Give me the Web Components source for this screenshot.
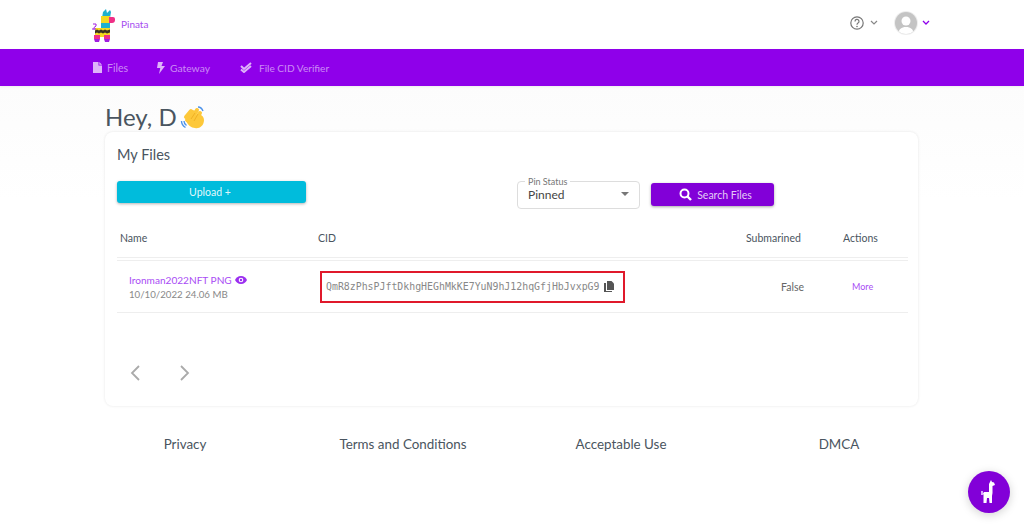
<!DOCTYPE html>
<html lang="en">
<head>
<meta charset="utf-8">
<title>Pinata</title>
<style>
  html, body { margin: 0; height: 527px; overflow: hidden; }
  body { background: linear-gradient(#fcfcfc 86px, #fff 200px); font-family: "Lato", "Noto Sans", sans-serif; color: #4b5563; }
  main { display: block; padding: 18px 106px 0 105px; }
</style>
</head>
<body>
<pin-header></pin-header>
<pin-nav></pin-nav>
<main>
  <hey-title>Hey, D</hey-title>
  <files-card></files-card>
</main>
<pin-footer></pin-footer>
<pin-fab></pin-fab>

<script>
const llama = `<svg width="23" height="34" viewBox="0 0 23 34">
  <path d="M10 9l1-6 3-3 1 4 3-3 1 2-1 6z" fill="#1fb0cf"/>
  <path d="M9 7h9v8H9z" fill="#f4d920"/>
  <path d="M17 8h4a2 2 0 0 1 2 2v1a3 3 0 0 1-3 3h-3z" fill="#ef2f86"/>
  <path d="M9 14h9v6H9z" fill="#1fb0cf"/>
  <path d="M3 19h15v9H3z" fill="#f4d920"/>
  <path d="M3 21.500l2-1 2 1 2-1 2 1 2-1 2 1 3-1v3l-3 1-2-1-2 1-2-1-2 1-2-1-2 1z" fill="#3a3320"/>
  <rect x="2" y="26" width="6" height="4" fill="#ef2f86"/><rect x="12" y="26" width="6" height="4" fill="#ef2f86"/>
  <path d="M2 30h6l-1 3H3zM12 30h6l-1 3h-4z" fill="#a01ee0"/>
  <path d="M1 15h3v2l-2 1.500M2 18.500v2M0 20h4" fill="none" stroke="#a01ee0" stroke-width="1"/>
</svg>`;

class PinHeader extends HTMLElement {
  constructor() {
    super();
    this.attachShadow({ mode: 'open' });
    this.shadowRoot.innerHTML = `
      <style>
        :host { display: flex; align-items: center; height: 49px; background: #fff; padding: 0 94px 0 92px; box-sizing: border-box; }
        .logo { display: flex; align-items: center; gap: 6px; color: #a64cf0; font-size: 10px; }
        .logo svg { display: block; margin-top: 2px; }
        .logo span { margin-top: -1px; }
        .right { margin-left: auto; display: flex; align-items: center; padding-bottom: 4px; }
        .help { display: flex; align-items: center; gap: 6px; margin: 0 17px 0 1px; }
        .avatar { width: 22px; height: 22px; border-radius: 50%; background: #c4c4c4; overflow: hidden; margin-right: 5px; box-shadow: 0 0 0 1px #eee; }
        svg { display: block; }
      </style>
      <div class="logo">${llama}<span>Pinata</span></div>
      <div class="right">
        <div class="help">
          <svg width="14" height="14" viewBox="0 0 14 14"><circle cx="7" cy="7" r="6.2" fill="none" stroke="#777" stroke-width="1.2"/><path d="M5 5.4a2 2 0 1 1 3 1.7c-.7.4-1 .8-1 1.6" fill="none" stroke="#777" stroke-width="1.2"/><circle cx="7" cy="10.5" r=".8" fill="#777"/></svg>
          <svg width="8" height="5" viewBox="0 0 8 5"><path d="M1 1l3 3 3-3" fill="none" stroke="#888" stroke-width="1.2"/></svg>
        </div>
        <div class="avatar"><svg width="22" height="22" viewBox="0 0 22 22"><circle cx="11" cy="9" r="4.5" fill="#fff"/><path d="M3.5 22c0-5 3-7 7.500-7s7.500 2 7.500 7z" fill="#fff"/></svg></div>
        <svg width="8" height="5" viewBox="0 0 8 5"><path d="M1 1l3 3 3-3" fill="none" stroke="#8e00ea" stroke-width="1.3"/></svg>
      </div>`;
  }
}
customElements.define('pin-header', PinHeader);

class PinNav extends HTMLElement {
  constructor() {
    super();
    this.attachShadow({ mode: 'open' });
    this.shadowRoot.innerHTML = `
      <style>
        :host { display: flex; align-items: center; height: 37px; background: #8f00ea; padding-left: 93px; color: rgba(255,255,255,.55); font-size: 10.500px; box-shadow: 0 1px 2px rgba(0,0,0,.06); }
        .item { display: flex; align-items: center; gap: 5px; }
        svg { display: block; fill: rgba(255,255,255,.7); }
      </style>
      <div class="item" style="margin-right:28px"><svg width="9" height="11" viewBox="0 0 9 11"><path d="M0 0h5.500v3.500H9V11H0zM6.300 0L9 2.700H6.300z"/></svg>Files</div>
      <div class="item" style="margin-right:30px"><svg width="9" height="12" viewBox="0 0 9 12"><path d="M2 0h5L5.500 4H9L3 12l1.300-6H1z"/></svg><span style="font-size:10.300px">Gateway</span></div>
      <div class="item" style="gap:7px"><svg width="12" height="11" viewBox="0 0 12 11"><path d="M1 4l3 3 7-6" fill="none" stroke="rgba(255,255,255,.7)" stroke-width="2"/><path d="M1 7.500l3 2.500 7-6" fill="none" stroke="rgba(255,255,255,.7)" stroke-width="2"/></svg><span style="font-size:10.100px">File CID Verifier</span></div>`;
  }
}
customElements.define('pin-nav', PinNav);

class HeyTitle extends HTMLElement {
  constructor() {
    super();
    this.attachShadow({ mode: 'open' });
    this.shadowRoot.innerHTML = `
      <style>
        :host { display: flex; align-items: center; gap: 3px; height: 28px; box-sizing: border-box; padding-bottom: 4px; font-size: 24px; color: #4a5560; }
        svg { margin-top: 3px; }
      </style>
      <slot></slot>
      <svg width="25" height="24" viewBox="0 0 25 24">
        <g fill="none" stroke="#fdc83a" stroke-width="4" stroke-linecap="round">
          <path d="M7 14l6-8M10 16l7-12M14 17l6-10M6 11l5-6"/>
        </g>
        <path d="M7 15l6-4 6-3c3 1 5 3 5 6 0 6-5 9-9 8-4 0-7-3-9-7z" fill="#fdc83a"/>
        <path d="M11 13l4-6M14 15l4-7" stroke="#eba91f" stroke-width=".8" fill="none"/>
        <path d="M1.500 15c0 2.500 1.500 5 4 6.500M4 15c0 2 1 3.500 2.500 4.500" stroke="#4f94ea" stroke-width="1.400" fill="none"/>
        <path d="M18 1c2 0 4 1.500 5 4" stroke="#4f94ea" stroke-width="1.400" fill="none"/>
      </svg>`;
  }
}
customElements.define('hey-title', HeyTitle);

class FileRow extends HTMLElement {
  constructor() {
    super();
    this.attachShadow({ mode: 'open' });
    const cid = this.getAttribute('cid');
    this.shadowRoot.innerHTML = `
      <style>
        :host { display: grid; grid-template-columns: 203px 1fr 65px; align-items: center; height: 53px; border-top: 1px solid #eee; border-bottom: 1px solid #eee; box-sizing: border-box; font-size: 10.500px; color: #777; }
        .name { padding-left: 12px; line-height: 14px; }
        .name .t { color: #a94cf5; display: flex; align-items: center; gap: 3px; font-size: 10.100px; }
        .name .m { font-size: 9.700px; color: #888; }
        .cid { justify-self: start; display: flex; align-items: center; gap: 5px; width: 305px; height: 32px; box-sizing: border-box; border: 2px solid #e0192b; padding-left: 4px; font: 9.900px "DejaVu Sans Mono", monospace; color: #888; }
        .false { padding-right: 39px; color: #666; }
        .more { color: #a94cf5; font-size: 9px; padding-left: 9px; }
        svg { display: block; }
      </style>
      <div class="name">
        <div class="t">${this.getAttribute('name')}
          <svg width="12" height="8" viewBox="0 0 12 8"><path d="M6 0c3 0 5 2 6 4-1 2-3 4-6 4S1 6 0 4c1-2 3-4 6-4z" fill="#9b2ff0"/><circle cx="6" cy="4" r="2.300" fill="#fff"/><circle cx="6" cy="4" r="1.200" fill="#9b2ff0"/></svg>
        </div>
        <div class="m">${this.getAttribute('meta')}</div>
      </div>
      <div style="display:flex;align-items:center;justify-content:space-between">
        <div class="cid"><span>${cid}</span>
          <svg width="10" height="11" viewBox="0 0 10 11"><path d="M3 0h4.500L10 2.500V9H3z" fill="#555"/><path d="M0 2h2v8h6v1H0z" fill="#555"/></svg>
        </div>
        <span class="false">False</span>
      </div>
      <div class="more">More</div>`;
  }
}
customElements.define('file-row', FileRow);

class FilesCard extends HTMLElement {
  constructor() {
    super();
    this.attachShadow({ mode: 'open' });
    this.shadowRoot.innerHTML = `
      <style>
        :host { display: block; height: 274px; box-sizing: border-box; padding: 13px 10px 0 12px; background: #fff; border-radius: 8px; box-shadow: 0 0 3px rgba(0,0,0,.1); }
        h2 { margin: 0; font-size: 14.500px; font-weight: 400; line-height: 20px; color: #4a5560; }
        .bar { display: flex; align-items: flex-start; margin-top: 16px; height: 28px; }
        .upload { width: 189px; height: 22px; border: 0; border-radius: 3px; background: #00bcdc; color: rgba(255,255,255,.9); font: inherit; font-size: 10.500px; box-shadow: 0 1px 3px rgba(0,0,0,.3); padding: 0 3px 0 0; }
        .select { position: relative; margin-left: 211px; width: 123px; height: 28px; box-sizing: border-box; border: 1px solid #ddd; border-radius: 4px; display: flex; align-items: center; justify-content: space-between; padding: 0 10px 2px; font-size: 12px; color: #444; }
        .select label { position: absolute; left: 7px; top: -5px; padding: 0 3px; background: #fff; font-size: 9px; color: #777; line-height: 10px; }
        .caret { width: 0; height: 0; border: 4px solid transparent; border-top: 4px solid #777; border-bottom: 0; }
        .search { display: flex; align-items: center; justify-content: center; gap: 5px; margin: 2px 0 0 11px; width: 123px; height: 23px; border: 0; border-radius: 3px; background: #8200d8; color: rgba(255,255,255,.8); font: inherit; font-size: 10.500px; box-shadow: 0 1px 3px rgba(0,0,0,.35); padding: 0 0 0 6px; }
        .head { display: grid; grid-template-columns: 198px 428px 97px 1fr; align-items: start; height: 49px; border-bottom: 1px solid #eee; font-size: 10.500px; line-height: 14px; color: #4a5560; box-sizing: border-box; padding: 22px 0 0 3px; margin-bottom: 2px; }
        .pager { display: flex; gap: 40px; padding: 52px 0 0 13px; }
        svg { display: block; }
      </style>
      <h2>My Files</h2>
      <div class="bar">
        <button class="upload">Upload +</button>
        <div class="select"><label>Pin Status</label><span>Pinned</span><i class="caret"></i></div>
        <button class="search">
          <svg width="13" height="13" viewBox="0 0 13 13"><circle cx="5.500" cy="5.500" r="4" fill="none" stroke="#fff" stroke-width="2"/><path d="M8.500 8.500l3.500 3.500" stroke="#fff" stroke-width="2.400"/></svg>
          Search Files</button>
      </div>
      <div class="head"><span>Name</span><span>CID</span><span>Submarined</span><span>Actions</span></div>
      <file-row name="Ironman2022NFT PNG" meta="10/10/2022 24.06 MB" cid="QmR8zPhsPJftDkhgHEGhMkKE7YuN9hJ12hqGfjHbJvxpG9"></file-row>
      <div class="pager">
        <svg width="10" height="16" viewBox="0 0 10 16"><path d="M9 1L2 8l7 7" fill="none" stroke="#aaa" stroke-width="1.800"/></svg>
        <svg width="10" height="16" viewBox="0 0 10 16"><path d="M1 1l7 7-7 7" fill="none" stroke="#aaa" stroke-width="1.800"/></svg>
      </div>`;
  }
}
customElements.define('files-card', FilesCard);

class PinFooter extends HTMLElement {
  constructor() {
    super();
    this.attachShadow({ mode: 'open' });
    this.shadowRoot.innerHTML = `
      <style>
        :host { display: grid; grid-template-columns: repeat(4, 218px); justify-content: center; margin-top: 29px; font-size: 13.400px; line-height: 18px; color: #4a5560; text-align: center; }
      </style>
      <span>Privacy</span><span>Terms and Conditions</span><span>Acceptable Use</span><span>DMCA</span>`;
  }
}
customElements.define('pin-footer', PinFooter);

class PinFab extends HTMLElement {
  constructor() {
    super();
    this.attachShadow({ mode: 'open' });
    this.shadowRoot.innerHTML = `
      <style>
        :host { position: fixed; left: 968px; top: 471px; width: 42px; height: 42px; border-radius: 50%; background: #8200d8; display: flex; align-items: center; justify-content: center; box-shadow: 0 2px 10px rgba(0,0,0,.18); }
      </style>
      <svg width="16" height="24" viewBox="0 0 16 24"><path d="M10 0l1 2 2 .5 1 2.500-2.500 1V13c0 1-.5 2-.5 3v7H8.500l-.5-5H6l-.5 5H2.500v-8l-.5-1.500L3 12h5V4z" fill="#fff"/><path d="M0 11h2v4H0z" fill="#d9a6ff"/></svg>`;
  }
}
customElements.define('pin-fab', PinFab);
</script>
</body>
</html>
